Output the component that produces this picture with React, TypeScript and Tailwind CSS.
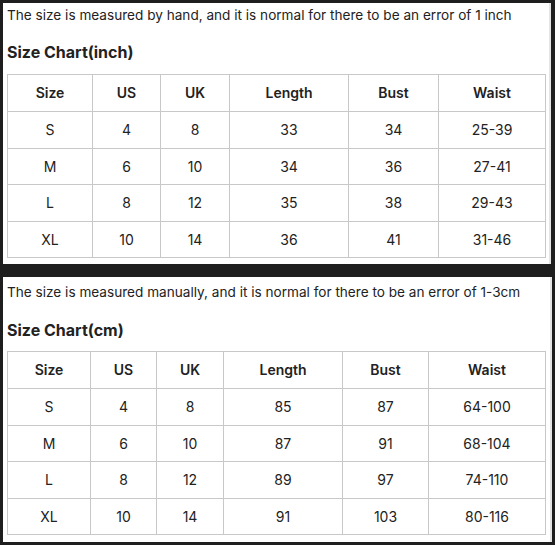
import React from "react";

type Chart = {
  note: string;
  title: string;
  cols: number[];
  rows: string[][];
};

const headers = ["Size", "US", "UK", "Length", "Bust", "Waist"];

const charts: Chart[] = [
  {
    note: "The size is measured by hand, and it is normal for there to be an error of 1 inch",
    title: "Size Chart(inch)",
    cols: [85, 68, 69, 119, 90, 107],
    rows: [
      ["S", "4", "8", "33", "34", "25-39"],
      ["M", "6", "10", "34", "36", "27-41"],
      ["L", "8", "12", "35", "38", "29-43"],
      ["XL", "10", "14", "36", "41", "31-46"],
    ],
  },
  {
    note: "The size is measured manually, and it is normal for there to be an error of 1-3cm",
    title: "Size Chart(cm)",
    cols: [83, 66, 67, 119, 86, 117],
    rows: [
      ["S", "4", "8", "85", "87", "64-100"],
      ["M", "6", "10", "87", "91", "68-104"],
      ["L", "8", "12", "89", "97", "74-110"],
      ["XL", "10", "14", "91", "103", "80-116"],
    ],
  },
];

function SizeTable({ chart }: { chart: Chart }) {
  return (
    <table className="w-[538px] table-fixed border-collapse text-[14px] text-[#222]">
      <colgroup>
        {chart.cols.map((w, i) => (
          <col key={i} style={{ width: w }} />
        ))}
      </colgroup>
      <thead>
        <tr className="h-[37px]">
          {headers.map((h) => (
            <th key={h} className="border border-[#c8c8c8] p-0 pb-[1px] text-center font-semibold">
              {h}
            </th>
          ))}
        </tr>
      </thead>
      <tbody>
        {chart.rows.map((r, ri) => (
          <tr key={ri} className="h-[36.5px]">
            {r.map((c, ci) => (
              <td key={ci} className="border border-[#c8c8c8] p-0 text-center font-normal">
                {c}
              </td>
            ))}
          </tr>
        ))}
      </tbody>
    </table>
  );
}

export default function App() {
  return (
    <div
      className="w-[555px] h-[545px] bg-[#1e1e1e] pt-[3px] pl-[3px]"
      style={{ fontFamily: "Inter, 'Noto Sans', sans-serif" }}
    >
      <div className="w-[548px] h-[261px] bg-white border-r-2 border-[#e4e4e4] pt-[2px] pl-[4px]">
        <p className="text-[13.6px] leading-[20px] text-[#222]">{charts[0].note}</p>
        <h2 className="mt-[15px] text-[16px] leading-[24px] font-bold text-[#222]">{charts[0].title}</h2>
        <div className="mt-[10px]">
          <SizeTable chart={charts[0]} />
        </div>
      </div>
      <div className="mt-[13px] w-[549px] h-[265px] bg-white border-r-2 border-[#e4e4e4] pt-[5px] pl-[4px]">
        <p className="text-[13.6px] leading-[20px] text-[#222]">{charts[1].note}</p>
        <h2 className="mt-[16px] text-[16px] leading-[24px] font-bold text-[#222]">{charts[1].title}</h2>
        <div className="mt-[9px]">
          <SizeTable chart={charts[1]} />
        </div>
      </div>
    </div>
  );
}
